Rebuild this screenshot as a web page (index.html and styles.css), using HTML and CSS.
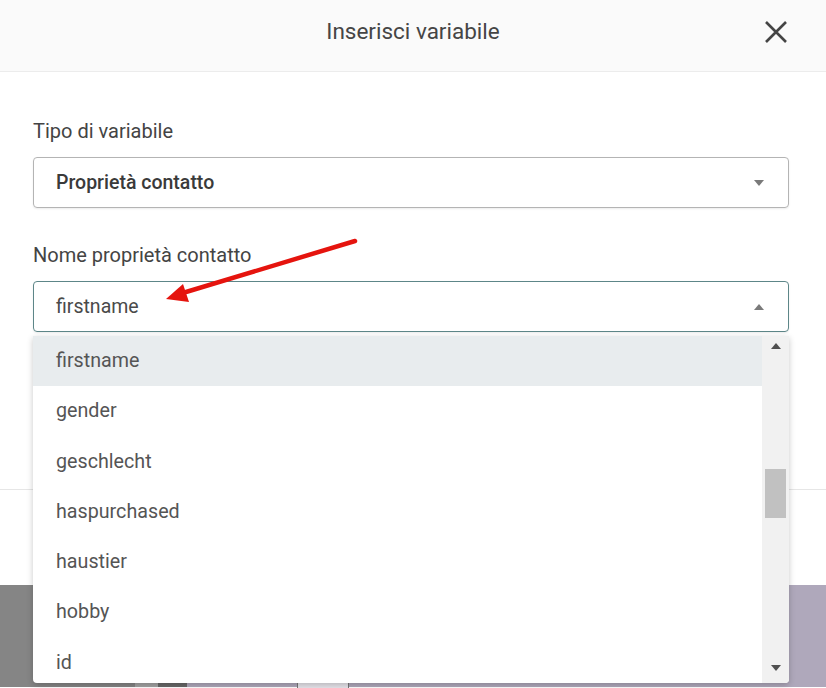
FILE: index.html
```html
<!DOCTYPE html>
<html lang="it">
<head>
    <meta charset="UTF-8">
    <meta name="viewport" content="width=device-width, initial-scale=1.0">
    <title>Inserisci variabile</title>
    <link rel="stylesheet" href="styles.css">
</head>
<body>

<div class="page">
    <div class="modal">
        <div class="modal-header">
            <span></span>
            <h1>Inserisci variabile</h1>
            <button class="close" aria-label="Chiudi">
                <svg width="24" height="24" viewBox="0 0 24 24">
                    <path d="M2 2 L22 22 M22 2 L2 22" stroke="#444" stroke-width="2.6" fill="none"/>
                </svg>
            </button>
        </div>

        <div class="modal-body">
            <div class="field">
                <label>Tipo di variabile</label>
                <div class="select">
                    <span>Proprietà contatto</span>
                    <span class="caret"></span>
                </div>
            </div>

            <div class="field open">
                <label>Nome proprietà contatto</label>
                <div class="select active">
                    <span>firstname</span>
                    <span class="caret up"></span>
                </div>

                <!-- dropdown list -->
                <div class="options">
                    <ul>
                        <li class="selected">firstname</li>
                        <li>gender</li>
                        <li>geschlecht</li>
                        <li>haspurchased</li>
                        <li>haustier</li>
                        <li>hobby</li>
                        <li>id</li>
                    </ul>
                    <div class="scrollbar">
                        <span class="arrow up"></span>
                        <div class="track">
                            <div class="thumb"></div>
                        </div>
                        <span class="arrow down"></span>
                    </div>
                </div>
            </div>

            <div class="field hidden-field">
                <div class="input"></div>
            </div>
        </div>

        <div class="modal-footer">
            <div class="btn"></div>
        </div>
    </div>

    <div class="backdrop">
        <div class="bd-gray"></div>
        <div class="bd-light"></div>
        <div class="bd-dark"></div>
        <div class="bd-lavender">
            <div class="bd-box"></div>
        </div>
    </div>

    <svg class="pointer" width="826" height="688" viewBox="0 0 826 688">
        <line x1="355" y1="241" x2="186" y2="292" stroke="#e5140e" stroke-width="4.5" stroke-linecap="round"/>
        <polygon points="166,299 189,302 183,284" fill="#e5140e"/>
    </svg>
</div>

</body>
</html>
```

FILE: styles.css
```css
body {
    margin: 0;
    font-family: Roboto, 'Liberation Sans', sans-serif;
    background: #fff;
    overflow: hidden;
}
.page {
    position: relative;
    width: 826px;
    height: 688px;
    overflow: hidden;
}
.modal {
    background: #fff;
}
.modal-header {
    height: 71px;
    background: #fafafa;
    border-bottom: 1px solid #ececec;
    display: grid;
    grid-template-columns: 1fr auto 1fr;
    align-items: center;
}
.modal-header h1 {
    margin: 0;
    font-size: 22.5px;
    font-weight: 400;
    color: #454545;
    padding-bottom: 9px;
}
.close {
    justify-self: end;
    margin-right: 38px;
    margin-bottom: 8px;
    background: none;
    border: none;
    padding: 0;
    width: 24px;
    height: 24px;
}
.close svg {
    display: block;
}
.modal-body {
    padding: 49px 37px 0 33px;
    height: 368px;
}
.field {
    position: relative;
}
.field + .field {
    margin-top: 37px;
}
.field label {
    display: block;
    font-size: 20px;
    line-height: 20px;
    font-weight: 400;
    color: #444;
    margin-bottom: 16px;
}
.select {
    box-sizing: border-box;
    height: 51px;
    border: 1px solid #b4b4b4;
    border-radius: 4px;
    box-shadow: 0 1px 2px rgba(0, 0, 0, 0.08);
    padding: 0 24px 0 22px;
    display: flex;
    align-items: center;
    justify-content: space-between;
    font-size: 19.5px;
    font-weight: 500;
    color: #3a3a3a;
}
.select.active {
    border-color: #5d8688;
    font-weight: 400;
    color: #4a4a4a;
}
.caret {
    width: 0;
    height: 0;
    border-left: 5px solid transparent;
    border-right: 5px solid transparent;
    border-top: 6px solid #7a7a7a;
}
.caret.up {
    border-top: none;
    border-bottom: 6px solid #7a7a7a;
}
.options {
    position: absolute;
    top: calc(100% + 4px);
    left: 0;
    right: 0;
    height: 347px;
    background: #fff;
    border-radius: 0 0 4px 4px;
    box-shadow: 0 2px 6px rgba(0, 0, 0, 0.22);
    display: flex;
    overflow: hidden;
    z-index: 2;
}
.options ul {
    flex: 1;
    list-style: none;
    margin: 0;
    padding: 0;
}
.options li {
    height: 50.3px;
    line-height: 50.3px;
    padding-left: 23px;
    font-size: 19.7px;
    color: #555;
}
.options li.selected {
    background: #e8ecee;
}
.scrollbar {
    width: 27px;
    background: #f1f1f1;
    display: flex;
    flex-direction: column;
    align-items: center;
}
.arrow {
    width: 0;
    height: 0;
    border-left: 5px solid transparent;
    border-right: 5px solid transparent;
}
.arrow.up {
    margin-top: 7px;
    border-bottom: 6px solid #505050;
}
.arrow.down {
    margin-bottom: 12px;
    border-top: 6px solid #505050;
}
.track {
    flex: 1;
    width: 100%;
}
.thumb {
    margin: 120px 3px 0 3px;
    height: 49px;
    background: #c1c1c1;
}
.hidden-field {
    margin-top: 65px !important;
}
.input {
    height: 45px;
    box-sizing: border-box;
    border: 1px solid #c8c8c8;
    border-radius: 4px;
}
.modal-footer {
    border-top: 1px solid #e6e6e6;
    height: 96px;
    padding: 27px 37px 0 33px;
    box-sizing: border-box;
}
.btn {
    height: 44px;
    border: 1px solid #90aab6;
    border-radius: 4px;
}
.backdrop {
    height: 102px;
    display: flex;
}
.bd-gray {
    width: 135px;
    background: #858585;
}
.bd-light {
    width: 23px;
    background: #a3a3a3;
}
.bd-dark {
    width: 29px;
    background: #686868;
}
.bd-lavender {
    flex: 1;
    background: #afa8bb;
    position: relative;
}
.bd-box {
    position: absolute;
    left: 110px;
    top: 96px;
    width: 50px;
    height: 20px;
    background: #e6e4ea;
    border: 1px solid #777;
}
.pointer {
    position: absolute;
    top: 0;
    left: 0;
    z-index: 3;
    pointer-events: none;
}
```
